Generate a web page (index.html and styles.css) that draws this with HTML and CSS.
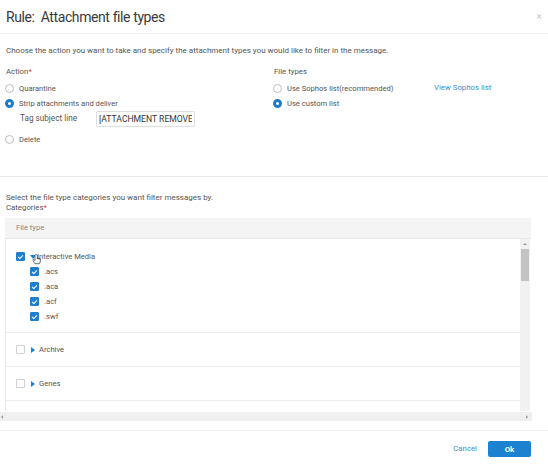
FILE: index.html
```html
<!DOCTYPE html>
<html>
<head>
    <meta charset="UTF-8">
    <title>Rule: Attachment file types</title>
    <link rel="stylesheet" href="styles.css">
</head>
<body>
    <div class="dialog">
        <div class="dialog-header">
            <h1>Rule:&nbsp; Attachment file types</h1>
            <span class="close">&times;</span>
        </div>

        <div class="dialog-body">
            <p class="intro">Choose the action you want to take and specify the attachment types you would like to filter in the message.</p>

            <div class="options">
                <div class="option-col">
                    <div class="field-label">Action<span class="req">*</span></div>
                    <div class="radio-row"><span class="radio"></span>Quarantine</div>
                    <div class="radio-row"><span class="radio checked"></span>Strip attachments and deliver</div>
                    <div class="tag-row">
                        <span class="tag-label">Tag subject line</span>
                        <input type="text" class="tag-input" value="[ATTACHMENT REMOVED]">
                    </div>
                    <div class="radio-row delete-row"><span class="radio"></span>Delete</div>
                </div>
                <div class="option-col">
                    <div class="field-label">File types</div>
                    <div class="radio-row">
                        <span class="radio"></span><span class="radio-text">Use Sophos list(recommended)</span>
                        <a class="link">View Sophos list</a>
                    </div>
                    <div class="radio-row"><span class="radio checked"></span>Use custom list</div>
                </div>
            </div>
        </div>

        <div class="separator"></div>

        <div class="categories">
            <p class="intro">Select the file type categories you want filter messages by.</p>
            <div class="field-label">Categories<span class="req">*</span></div>
        </div>

        <div class="grid-box">
            <div class="grid">
                <div class="grid-head">File type</div>
                <div class="grid-body">
                    <div class="grid-rows">
                        <div class="grid-row open">
                            <div class="tree-line">
                                <span class="check on"></span>
                                <span class="caret down"></span>
                                <span>Interactive Media</span>
                                <svg class="hand" width="9" height="11" viewBox="0 0 9 11">
                                    <path d="M3 1.2v5.3L2 5.6c-.5-.4-1.2-.2-1.1.5l2 3.6h4.6l.9-2.6V4.8c0-.6-1-.6-1 0v.6-.9c0-.6-1-.6-1 0v.6-.8c0-.6-1-.6-1 0v.7V1.2C4.3.4 3 .4 3 1.2z" fill="#fff" stroke="#333" stroke-width=".7"/>
                                </svg>
                            </div>
                            <div class="tree-line child"><span class="check on"></span><span>.acs</span></div>
                            <div class="tree-line child"><span class="check on"></span><span>.aca</span></div>
                            <div class="tree-line child"><span class="check on"></span><span>.acf</span></div>
                            <div class="tree-line child"><span class="check on"></span><span>.swf</span></div>
                        </div>
                        <div class="grid-row">
                            <div class="tree-line">
                                <span class="check"></span>
                                <span class="caret right"></span>
                                <span>Archive</span>
                            </div>
                        </div>
                        <div class="grid-row">
                            <div class="tree-line">
                                <span class="check"></span>
                                <span class="caret right"></span>
                                <span>Genes</span>
                            </div>
                        </div>
                        <div class="grid-row partial"></div>
                    </div>
                    <div class="vscroll">
                        <span class="arrow-up"></span>
                        <div class="thumb"></div>
                    </div>
                </div>
            </div>
            <div class="hscroll">
                <span class="arrow-left"></span>
                <span class="arrow-right"></span>
            </div>
        </div>

        <div class="dialog-footer">
            <a class="cancel">Cancel</a>
            <button class="ok-button">Ok</button>
        </div>
    </div>
</body>
</html>
```

FILE: styles.css
```css
body {
    margin: 0;
    background: #fff;
    font-family: Roboto, "Liberation Sans", sans-serif;
    color: #555;
}
.dialog {
    width: 548px;
    height: 466px;
    display: flex;
    flex-direction: column;
    overflow: hidden;
}

/* Header */
.dialog-header {
    height: 34px;
    display: flex;
    align-items: center;
    justify-content: space-between;
    padding: 0 6px;
    border-bottom: 1px solid #f1f1f1;
    box-sizing: border-box;
}
.dialog-header h1 {
    margin: 0;
    font-size: 14px;
    font-weight: 400;
    color: #3a3a3a;
    letter-spacing: -0.4px;
}
.close {
    color: #ccc;
    font-size: 11px;
}

/* Body */
.dialog-body {
    padding: 0 6px;
}
.intro {
    margin: 12px 0 0;
    font-size: 8px;
    line-height: 10px;
    color: #555;
}
.options {
    display: grid;
    grid-template-columns: 268px 1fr;
    margin-top: 11px;
}
.field-label {
    font-size: 7.8px;
    line-height: 10px;
    color: #555;
}
.req {
    color: #e04040;
}
.radio-row {
    display: flex;
    align-items: center;
    height: 15px;
    font-size: 7.6px;
    color: #555;
}
.option-col .field-label {
    margin-bottom: 4px;
}
.radio {
    width: 9px;
    height: 9px;
    border: 1px solid #bdbdbd;
    border-radius: 50%;
    box-sizing: border-box;
    margin-right: 5px;
    flex-shrink: 0;
    margin-left: -1px;
}
.radio.checked {
    border: 3px solid #1c7cc9;
}
.radio-text {
    width: 147px;
}
.link {
    color: #3d8fd1;
    font-size: 7.8px;
    margin-top: -3px;
}
.tag-row {
    display: flex;
    align-items: center;
    height: 16px;
    padding-left: 14px;
}
.tag-label {
    width: 76px;
    font-size: 8.2px;
    color: #555;
    margin-top: -2px;
}
.tag-input {
    width: 99px;
    height: 16px;
    box-sizing: border-box;
    border: 1px solid #ddd;
    border-radius: 2px;
    padding: 0 2px;
    font-family: Roboto, "Liberation Sans", sans-serif;
    font-size: 8.6px;
    color: #333;
    outline: none;
}
.delete-row {
    margin-top: 5px;
}

.separator {
    margin-top: 29px;
    border-top: 1px solid #e9e9e9;
}

/* Categories */
.categories {
    padding: 0 6px;
}
.categories .intro {
    margin-top: 16px;
}
.grid-box {
    margin-top: 5px;
    width: 532px;
}
.grid {
    margin-left: 5px;
    width: 526px;
}
.grid-head {
    height: 20px;
    line-height: 20px;
    background: #f4f4f5;
    border-bottom: 1px solid #e8e8e8;
    padding-left: 11px;
    font-size: 7.6px;
    color: #888;
}
.grid-body {
    display: flex;
    height: 172px;
    border-left: 1px solid #e6e6e6;
    overflow: hidden;
}
.grid-rows {
    flex: 1;
}
.grid-row {
    border-bottom: 1px solid #ececec;
    padding: 0 0 0 10px;
    height: 33px;
    display: flex;
    flex-direction: column;
    justify-content: center;
}
.grid-row.open {
    justify-content: flex-start;
    padding-top: 10px;
    box-sizing: border-box;
    height: 94px;
}
.grid-row.partial {
    border-bottom: none;
    height: 20px;
}
.tree-line {
    display: flex;
    align-items: center;
    height: 15px;
    font-size: 7.6px;
    color: #555;
    position: relative;
}
.tree-line.child {
    padding-left: 14px;
}
.check {
    width: 9px;
    height: 9px;
    box-sizing: border-box;
    border: 1px solid #d0d0d0;
    border-radius: 1px;
    margin-right: 5px;
    flex-shrink: 0;
    position: relative;
}
.check.on {
    background: #1f7fcf;
    border-color: #1f7fcf;
}
.check.on::after {
    content: "";
    position: absolute;
    left: 2px;
    top: 0.5px;
    width: 2px;
    height: 4px;
    border: solid #fff;
    border-width: 0 1.3px 1.3px 0;
    transform: rotate(45deg);
}
.caret {
    width: 0;
    height: 0;
    margin-right: 3px;
    flex-shrink: 0;
}
.caret.down {
    border-left: 3px solid transparent;
    border-right: 3px solid transparent;
    border-top: 4px solid #1f7fcf;
    margin-right: 1px;
}
.caret.right {
    border-top: 3px solid transparent;
    border-bottom: 3px solid transparent;
    border-left: 4px solid #1f7fcf;
    margin-left: 1px;
    margin-right: 4px;
}
.hand {
    position: absolute;
    left: 16px;
    top: 5px;
}

/* Scrollbars */
.vscroll {
    width: 10px;
    background: #f1f1f1;
    position: relative;
    margin-right: 1px;
}
.arrow-up {
    position: absolute;
    left: 3px;
    top: 4px;
    border-left: 2px solid transparent;
    border-right: 2px solid transparent;
    border-bottom: 2px solid #999;
}
.thumb {
    position: absolute;
    left: 1px;
    right: 1px;
    top: 10px;
    height: 32px;
    background: #c3c3c3;
}
.hscroll {
    height: 9px;
    margin-top: 1px;
    background: #f0f0f0;
    position: relative;
}
.arrow-left {
    position: absolute;
    left: 1px;
    top: 3px;
    border-top: 2px solid transparent;
    border-bottom: 2px solid transparent;
    border-right: 2px solid #999;
}
.arrow-right {
    position: absolute;
    right: 4px;
    top: 3px;
    border-top: 2px solid transparent;
    border-bottom: 2px solid transparent;
    border-left: 2px solid #999;
}

/* Footer */
.dialog-footer {
    margin-top: 9px;
    border-top: 1px solid #f0f0f0;
    display: flex;
    justify-content: flex-end;
    align-items: center;
    padding: 10px 17px 0 0;
}
.cancel {
    color: #3d8fd1;
    font-size: 7.8px;
    margin-right: 11px;
    margin-top: -2px;
}
.ok-button {
    width: 43px;
    height: 16px;
    border: none;
    border-radius: 2px;
    background: #1b82d1;
    color: #fff;
    font-family: Roboto, "Liberation Sans", sans-serif;
    font-size: 7.8px;
    font-weight: 700;
    padding: 0;
}
```
